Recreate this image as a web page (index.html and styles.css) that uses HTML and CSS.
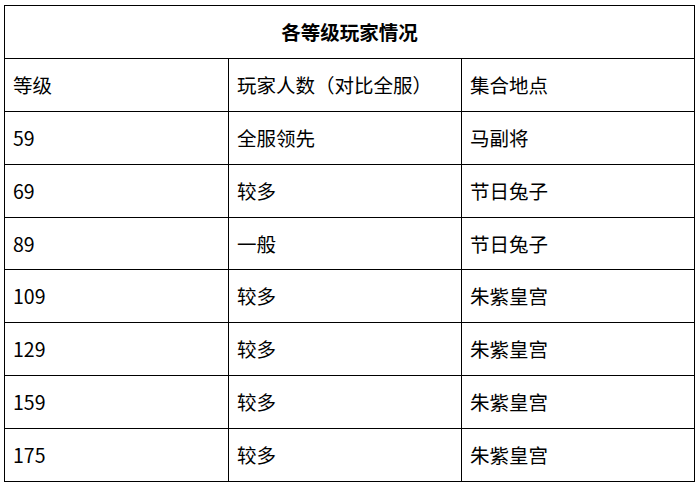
FILE: index.html
```html
<!DOCTYPE html>
<html lang="zh">
<head>
<meta charset="utf-8">
<link rel="stylesheet" href="styles.css">
</head>
<body>
<div class="table">
  <div class="cell title">各等级玩家情况</div>
  <div class="cell">等级</div><div class="cell">玩家人数（对比全服）</div><div class="cell">集合地点</div>
  <div class="cell">59</div><div class="cell">全服领先</div><div class="cell">马副将</div>
  <div class="cell">69</div><div class="cell">较多</div><div class="cell">节日兔子</div>
  <div class="cell">89</div><div class="cell">一般</div><div class="cell">节日兔子</div>
  <div class="cell">109</div><div class="cell">较多</div><div class="cell">朱紫皇宫</div>
  <div class="cell">129</div><div class="cell">较多</div><div class="cell">朱紫皇宫</div>
  <div class="cell">159</div><div class="cell">较多</div><div class="cell">朱紫皇宫</div>
  <div class="cell">175</div><div class="cell">较多</div><div class="cell">朱紫皇宫</div>
</div>
</body>
</html>
```
FILE: styles.css
```css
html, body {
  margin: 0;
  padding: 0;
  background: #fff;
}
body {
  padding: 5px 0 0 4px;
  font-family: "Noto Sans CJK SC", "Noto Sans", sans-serif;
  font-size: 19.5px;
  color: #000;
}
.table {
  display: grid;
  grid-template-columns: 223px 232px 232px;
  grid-template-rows: 52px 52px 52px 52px 51px 52px 52px 52px 52px;
  gap: 1px;
  padding: 1px;
  background: #000;
  width: 689px;
}
.cell {
  background: #fff;
  display: flex;
  align-items: center;
  padding-left: 8px;
  line-height: 1;
}
.title {
  grid-column: 1 / 4;
  justify-content: center;
  padding-left: 0;
  font-weight: bold;
}
```
